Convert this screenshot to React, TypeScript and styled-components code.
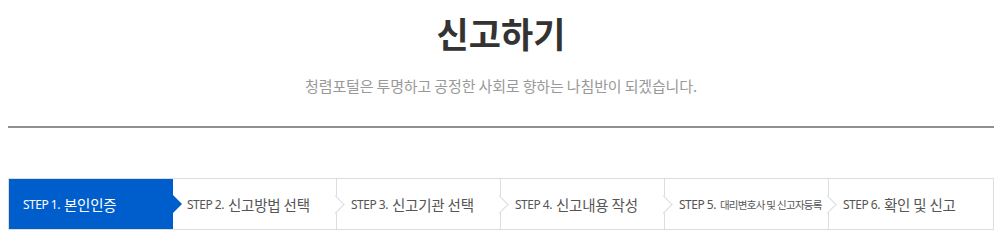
import React from "react";
import styled, { createGlobalStyle, css } from "styled-components";

const Global = createGlobalStyle`
  html, body { margin: 0; padding: 0; background: #fff; }
  body { font-family: "Noto Sans CJK KR", "Noto Sans", sans-serif; }
`;

const Page = styled.div`
  width: 986px;
  margin: 0 8px;
`;

const Header = styled.header`
  display: flex;
  flex-direction: column;
  align-items: center;
  padding-top: 13px;
  padding-bottom: 30px;
  border-bottom: 2px solid #909090;
`;

const Title = styled.h1`
  margin: 0;
  font-size: 35px;
  line-height: 40px;
  font-weight: 700;
  color: #333;
`;

const Subtitle = styled.p`
  margin: 23px 0 0;
  font-size: 15px;
  line-height: 20px;
  color: #999;
  letter-spacing: -0.15px;
`;

const Steps = styled.ol`
  list-style: none;
  margin: 50px 0 0;
  padding: 0;
  display: flex;
  border: 1px solid #ddd;
  height: 50px;
`;

const Step = styled.li<{ $active?: boolean; $last?: boolean }>`
  position: relative;
  box-sizing: border-box;
  width: 164px;
  flex: none;
  display: flex;
  align-items: center;
  padding-left: 14px;
  color: #555;
  white-space: nowrap;
  ${(p) =>
    p.$active
      ? css`
          background: #005ecc;
          color: #fff;
          &::after {
            content: "";
            position: absolute;
            right: -9px;
            top: 50%;
            margin-top: -9px;
            border-left: 9px solid #005ecc;
            border-top: 9px solid transparent;
            border-bottom: 9px solid transparent;
            z-index: 2;
          }
        `
      : p.$last
      ? css``
      : css`
          border-right: 1px solid #ddd;
          &::after {
            content: "";
            position: absolute;
            right: -6px;
            top: 50%;
            box-sizing: border-box;
            width: 13px;
            height: 13px;
            margin-top: -6.5px;
            background: #fff;
            border-top: 1px solid #ddd;
            border-right: 1px solid #ddd;
            transform: rotate(45deg);
            z-index: 2;
          }
        `}
`;

const StepNo = styled.span`
  font-family: "Noto Sans", sans-serif;
  font-size: 12px;
  letter-spacing: -0.5px;
  margin-right: 4px;
`;

const StepName = styled.span<{ $small?: boolean }>`
  position: relative;
  z-index: 3;
  font-family: "Noto Sans CJK KR", sans-serif;
  font-size: ${(p) => (p.$small ? "10.5px" : "14.5px")};
  letter-spacing: ${(p) => (p.$small ? "-0.7px" : "-0.2px")};
`;

const steps = [
  { no: "STEP 1.", name: "본인인증" },
  { no: "STEP 2.", name: "신고방법 선택" },
  { no: "STEP 3.", name: "신고기관 선택" },
  { no: "STEP 4.", name: "신고내용 작성" },
  { no: "STEP 5.", name: "대리변호사 및 신고자등록", small: true },
  { no: "STEP 6.", name: "확인 및 신고" },
];

export default function App() {
  return (
    <Page>
      <Global />
      <Header>
        <Title>신고하기</Title>
        <Subtitle>청렴포털은 투명하고 공정한 사회로 향하는 나침반이 되겠습니다.</Subtitle>
      </Header>
      <Steps>
        {steps.map((s, i) => (
          <Step key={s.no} $active={i === 0} $last={i === steps.length - 1}>
            <StepNo>{s.no}</StepNo>
            <StepName $small={s.small}>{s.name}</StepName>
          </Step>
        ))}
      </Steps>
    </Page>
  );
}
